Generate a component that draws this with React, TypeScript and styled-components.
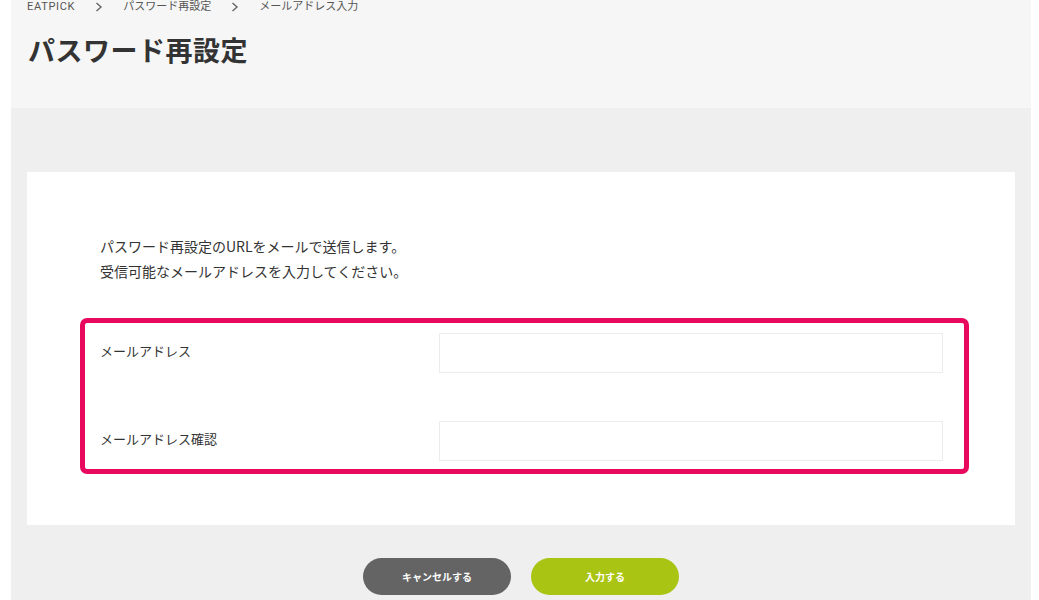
import React from "react";
import styled, { createGlobalStyle } from "styled-components";

const Global = createGlobalStyle`
  html, body { margin: 0; padding: 0; background: #ffffff; }
  body { font-family: "Noto Sans CJK JP", "Noto Sans", sans-serif; color: #333; }
  * { box-sizing: border-box; }
`;

const Page = styled.div`
  width: 1020px;
  margin-left: 11px;
  min-height: 600px;
  background: #efefef;
`;

const Header = styled.header`
  background: #f6f6f6;
  height: 108px;
  padding: 0 16px;
  display: flex;
  flex-direction: column;
`;

const Breadcrumb = styled.nav`
  display: flex;
  align-items: center;
  gap: 20px;
  height: 13px;
  font-family: "Roboto", "Noto Sans CJK JP", sans-serif;
  font-size: 11px;
  line-height: 13px;
  color: #555;
`;

const Crumb = styled.span<{ $latin?: boolean }>`
  white-space: nowrap;
  letter-spacing: ${(p) => (p.$latin ? "0.7px" : "0")};
`;

const Chevron = styled.svg`
  width: 8px;
  height: 10px;
`;

const Title = styled.h1`
  margin: 17px 0 0 1px;
  font-size: 27px;
  line-height: 40px;
  font-weight: 700;
  color: #333;
  letter-spacing: 0.5px;
`;

const Body = styled.main`
  padding: 64px 16px 0;
  display: flex;
  flex-direction: column;
  align-items: center;
`;

const Card = styled.section`
  width: 100%;
  background: #fff;
  padding: 62px 46px 51px 53px;
`;

const Lead = styled.p`
  margin: 0 0 34px 20px;
  font-size: 14px;
  line-height: 25px;
  color: #333;
`;

const Highlight = styled.div`
  border: 5px solid #e8095e;
  border-radius: 7px;
  padding: 10px 21px 8px 15px;
  display: flex;
  flex-direction: column;
  gap: 48px;
`;

const Row = styled.div`
  display: grid;
  grid-template-columns: 339px 1fr;
  align-items: center;
`;

const Label = styled.label`
  font-size: 13px;
  color: #333;
  padding-bottom: 5px;
`;

const Input = styled.input`
  height: 40px;
  width: 100%;
  border: 1px solid #ececec;
  background: #fff;
  outline: none;
  padding: 0 10px;
  font-size: 13px;
`;

const Actions = styled.div`
  display: flex;
  gap: 20px;
  margin-top: 33px;
`;

const Button = styled.button<{ $variant: "cancel" | "primary" }>`
  width: 148px;
  height: 37px;
  border: none;
  border-radius: 19px;
  background: ${(p) => (p.$variant === "cancel" ? "#646464" : "#aac414")};
  color: #fff;
  font-family: "Noto Sans CJK JP", sans-serif;
  font-size: 10px;
  font-weight: 700;
  cursor: pointer;
`;

const Arrow = () => (
  <Chevron viewBox="0 0 8 10">
    <path d="M1.5 1 L6 5 L1.5 9" fill="none" stroke="#666" strokeWidth="1.4" />
  </Chevron>
);

export default function App() {
  return (
    <>
      <Global />
      <Page>
        <Header>
          <Breadcrumb>
            <Crumb $latin>EATPICK</Crumb>
            <Arrow />
            <Crumb>パスワード再設定</Crumb>
            <Arrow />
            <Crumb>メールアドレス入力</Crumb>
          </Breadcrumb>
          <Title>パスワード再設定</Title>
        </Header>
        <Body>
          <Card>
            <Lead>
              パスワード再設定のURLをメールで送信します。
              <br />
              受信可能なメールアドレスを入力してください。
            </Lead>
            <Highlight>
              <Row>
                <Label htmlFor="email">メールアドレス</Label>
                <Input id="email" type="email" />
              </Row>
              <Row>
                <Label htmlFor="email2">メールアドレス確認</Label>
                <Input id="email2" type="email" />
              </Row>
            </Highlight>
          </Card>
          <Actions>
            <Button $variant="cancel">キャンセルする</Button>
            <Button $variant="primary">入力する</Button>
          </Actions>
        </Body>
      </Page>
    </>
  );
}
